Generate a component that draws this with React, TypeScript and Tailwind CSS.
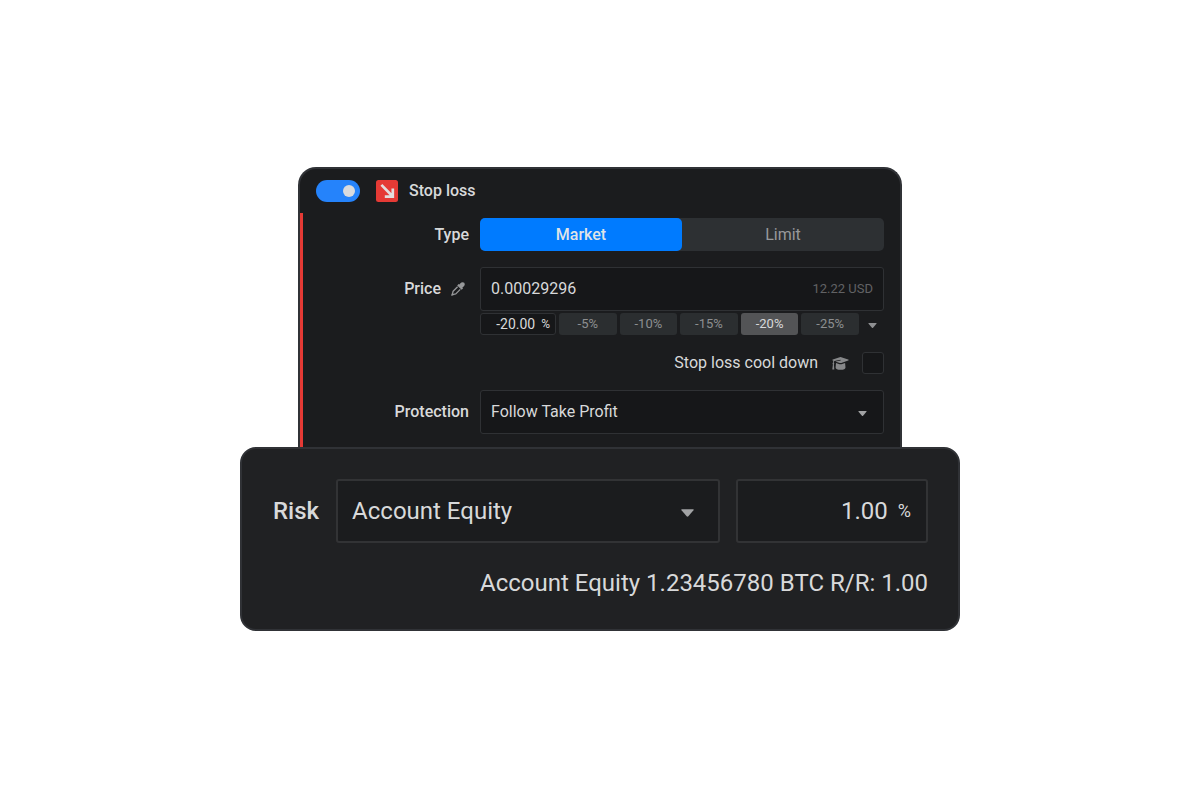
import { useState } from "react";
import type { ReactNode } from "react";

const presets = ["-5%", "-10%", "-15%", "-20%", "-25%"];

function Caret({ className }: { className: string }) {
  return (
    <svg viewBox="0 0 12 7" className={className} aria-hidden="true">
      <path d="M0.8 0H11.2Q12.2 0 11.5 0.9L6.8 6.5Q6 7.3 5.2 6.5L0.5 0.9Q-0.2 0 0.8 0Z" fill="currentColor" />
    </svg>
  );
}

function Dropper({ className }: { className: string }) {
  return (
    <svg viewBox="0 0 14 14" className={className} aria-hidden="true">
      <path d="M9.2 1.6Q10.2 0.2 11.7 0.2Q13.8 0.3 13.8 2.3Q13.8 3.6 12.4 4.7L11.4 5.5L12 6.4L10.6 7.8L6.2 3.4L7.6 2L8.4 2.5Z" fill="currentColor" />
      <path d="M6.6 4.7L2.1 9.2L1.6 11.3L0.8 13.2L2.7 12.4L4.8 11.9L9.3 7.4" fill="none" stroke="currentColor" strokeWidth="1.3" strokeLinejoin="round" />
    </svg>
  );
}

function GraduationCap({ className }: { className: string }) {
  return (
    <svg viewBox="0 0 17 13" className={className} aria-hidden="true">
      <path d="M7.7 0.2Q8.5 0 9.3 0.2L16.2 2.5Q17.2 3 16.2 3.6L9.3 6Q8.5 6.2 7.7 6L3.4 4.6L8.7 3.6L8.5 2.8L2.4 4Q1.8 4.5 1.7 5.6Q2.6 6.4 1.9 7.4L2.3 12.4H0.3L0.9 7.4Q0.2 6.4 1 5.5Q1 4.6 1.4 3.8L0.7 3.5Q-0.1 3 0.8 2.5Z" fill="currentColor" />
      <path d="M4 5.9L7.6 7.2Q8.5 7.5 9.4 7.2L13.1 5.9L13.5 10.4Q13.4 12.7 8.6 12.8Q3.7 12.7 3.6 10.4Z" fill="currentColor" />
    </svg>
  );
}

function Row({ label, htmlFor, icon, children }: { label: string; htmlFor?: string; icon?: ReactNode; children: ReactNode }) {
  return (
    <div className="grid grid-cols-[166px_1fr] items-center gap-[11px]">
      <div className="flex items-center justify-end gap-2.5 font-medium">
        <label htmlFor={htmlFor}>{label}</label>
        {icon}
      </div>
      {children}
    </div>
  );
}

export default function App() {
  const [preset, setPreset] = useState("-20%");
  const [type, setType] = useState("Market");
  const [enabled, setEnabled] = useState(true);

  return (
    <main className="flex min-h-screen flex-col items-center justify-center bg-white pb-0.5 font-[Roboto,sans-serif] text-[#d8d9da]">
      <section className="w-full max-w-[604px] overflow-hidden rounded-t-[18px] border-2 border-b-0 border-[#303236] bg-[#1b1c1e] text-base leading-5">
        <header className="flex items-center px-4 py-[11px]">
          <button
            type="button"
            role="switch"
            aria-checked={enabled}
            aria-label="Stop loss"
            onClick={() => setEnabled(!enabled)}
            className="flex h-[22px] w-11 items-center justify-end rounded-full bg-[#2583fb] px-[5px]"
          >
            <span className="size-3 rounded-full bg-[#d9dbde]" />
          </button>
          <svg viewBox="0 0 22 22" className="ml-4 size-[22px]" aria-hidden="true">
            <rect width="22" height="22" rx="2.5" fill="#e53a35" />
            <path d="M5.4 4.9L16 15.8M8.8 16.6H16.8V8.6" fill="none" stroke="#e3dddd" strokeWidth="2.7" />
          </svg>
          <h2 className="ml-[11px] font-medium">Stop loss</h2>
        </header>

        <div className="flex flex-col border-l-[3px] border-[#e53a35] pt-[5px] pr-4 pb-[13px]">
          <Row label="Type">
            <div className="grid h-[33px] grid-cols-2 rounded-[5px] bg-[#2d3033]">
              {["Market", "Limit"].map((name) => (
                <button
                  key={name}
                  type="button"
                  onClick={() => setType(name)}
                  className={type === name ? "rounded-[5px] bg-[#007bff] font-medium text-[#dfe3e8]" : "text-[#98999b]"}
                >
                  {name}
                </button>
              ))}
            </div>
          </Row>

          <div className="mt-4">
            <Row label="Price" htmlFor="price" icon={<Dropper className="mr-1 size-3.5 text-[#97989a]" />}>
              <div className="flex h-11 items-center rounded-[3px] border border-[#2f3134] bg-[#161719] px-2.5">
                <input id="price" defaultValue="0.00029296" className="w-full min-w-0 flex-1 bg-transparent outline-none" />
                <span className="text-[13px] text-[#616264]">12.22 USD</span>
              </div>
            </Row>
          </div>

          <div className="mt-0.5 ml-[177px] flex h-[22px] gap-[3px] text-[13px]">
            <div className="flex w-[76px] items-center gap-1.5 rounded-[3px] border border-[#2f3134] bg-[#161719] pr-[5px] pl-2">
              <input aria-label="Price offset" defaultValue="-20.00" className="w-full min-w-0 flex-1 bg-transparent text-right text-sm outline-none" />
              <span className="text-xs">%</span>
            </div>
            {presets.map((value) => (
              <button
                key={value}
                type="button"
                onClick={() => setPreset(value)}
                className={
                  preset === value
                    ? "min-w-0 flex-1 rounded-[3px] bg-[#535456] text-[#d8d9da]"
                    : "min-w-0 flex-1 rounded-[3px] bg-[#2b2e30] text-[#8d8e90]"
                }
              >
                {value}
              </button>
            ))}
            <button type="button" aria-label="More offsets" className="flex w-[22px] items-center justify-center pt-[3px] text-[#8f9092]">
              <Caret className="h-[5px] w-[9px]" />
            </button>
          </div>

          <div className="mt-[17px] flex h-[22px] items-center justify-end">
            <label htmlFor="cooldown">Stop loss cool down</label>
            <GraduationCap className="ml-3.5 h-[13px] w-[17px] text-[#87888a]" />
            <input
              id="cooldown"
              type="checkbox"
              className="ml-[13px] size-[22px] appearance-none rounded-[3px] border border-[#2f3134] bg-[#161719] checked:bg-[#007bff]"
            />
          </div>

          <div className="mt-4">
            <Row label="Protection" htmlFor="protection">
              <div className="grid h-11 items-center">
                <select
                  id="protection"
                  className="col-start-1 row-start-1 h-full w-full appearance-none rounded-[3px] border border-[#2f3134] bg-[#161719] pr-8 pl-2.5 outline-none"
                >
                  <option>Follow Take Profit</option>
                </select>
                <Caret className="pointer-events-none col-start-1 row-start-1 mt-0.5 mr-[17px] h-[5px] w-[9px] justify-self-end text-[#a2a3a5]" />
              </div>
            </Row>
          </div>
        </div>
      </section>

      <section className="w-full max-w-[720px] rounded-[16px] border-2 border-[#303236] bg-[#202123] p-[30px] text-2xl leading-8">
        <div className="flex items-center">
          <label htmlFor="risk" className="mr-[17px] pl-px font-medium">
            Risk
          </label>
          <div className="grid h-16 flex-1 items-center">
            <select
              id="risk"
              className="col-start-1 row-start-1 h-full w-full appearance-none rounded-[3px] border-2 border-[#323335] bg-[#1b1c1e] pr-12 pl-3.5 outline-none"
            >
              <option>Account Equity</option>
            </select>
            <Caret className="pointer-events-none col-start-1 row-start-1 mt-[3px] mr-[26px] h-2 w-[13px] justify-self-end text-[#a2a3a5]" />
          </div>
          <div className="ml-4 flex h-16 w-48 items-center gap-2.5 rounded-[3px] border-2 border-[#323335] bg-[#1b1c1e] px-[15px]">
            <input aria-label="Risk percent" defaultValue="1.00" className="w-full min-w-0 flex-1 bg-transparent text-right outline-none" />
            <span className="text-lg">%</span>
          </div>
        </div>
        <p className="mt-6 text-right">Account Equity 1.23456780 BTC R/R: 1.00</p>
      </section>
    </main>
  );
}
